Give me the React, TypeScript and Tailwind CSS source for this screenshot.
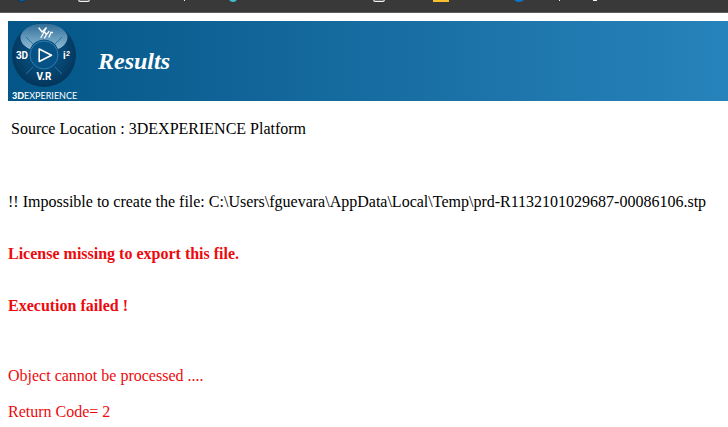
import React from "react";

function BookmarksBar() {
  return (
    <div className="flex h-[13px] items-start overflow-hidden border-b border-[#5c5c5c] bg-[#393939] pl-4">
      <svg className="shrink-0" width="62" height="3" aria-hidden="true">
        <circle cx="6" cy="-4" r="6" fill="#0b3a66" />
        <circle cx="6" cy="-3" r="4" fill="#1261a0" />
      </svg>
      <svg className="shrink-0" width="106" height="3" aria-hidden="true">
        <rect x="0.7" y="-9" width="10.6" height="10.4" rx="1.5" fill="none" stroke="#f2f2f2" strokeWidth="1.2" />
      </svg>
      <svg className="shrink-0" width="45" height="3" aria-hidden="true">
        <rect x="0" y="0" width="1" height="1" fill="#f2f2f2" />
      </svg>
      <svg className="shrink-0" width="144" height="3" aria-hidden="true">
        <circle cx="4" cy="-2" r="4" fill="#3fc1cf" />
      </svg>
      <svg className="shrink-0" width="60" height="3" aria-hidden="true">
        <rect x="0.7" y="-9" width="10.6" height="10.4" rx="1.5" fill="none" stroke="#f2f2f2" strokeWidth="1.2" />
      </svg>
      <svg className="shrink-0" width="80" height="3" aria-hidden="true">
        <rect width="16" height="2" fill="#f9bf2c" />
      </svg>
      <svg className="shrink-0" width="46" height="3" aria-hidden="true">
        <circle cx="6" cy="-5" r="7" fill="#0a78c8" />
      </svg>
      <svg className="shrink-0" width="60" height="3" aria-hidden="true">
        <path d="M0 0h1v1H0zM34 0h4v1h-4z" fill="#f2f2f2" />
      </svg>
    </div>
  );
}

function CompassLogo() {
  return (
    <svg className="shrink-0" width="72" height="80" viewBox="0 0 72 80" role="img" aria-label="3DEXPERIENCE">
      <defs>
        <radialGradient id="disc" cx="0.5" cy="0.45" r="0.55">
          <stop offset="0" stopColor="#07558a" />
          <stop offset="0.6" stopColor="#064672" />
          <stop offset="1" stopColor="#03355a" />
        </radialGradient>
        <linearGradient id="gloss" x1="0" y1="0" x2="0" y2="1">
          <stop offset="0" stopColor="#2f6c97" />
          <stop offset="0.5" stopColor="#5f95b8" />
          <stop offset="1" stopColor="#8fbad3" />
        </linearGradient>
      </defs>
      <circle cx="36" cy="34" r="32" fill="url(#disc)" />
      <path d="M12.500 15C15 7 25 2.500 36 2.500S57 7 59.500 15C60 23 53 27 50 28A15 15 0 0 0 22 28C17 26 12 22 12.500 15Z" fill="url(#gloss)" />
      <path d="M18 16l7 7M54 16l-7 7M18 53l7-7M54 53l-7-7" stroke="#2377a8" strokeWidth="1" />
      <circle cx="36" cy="34" r="14" fill="#075285" stroke="#2d80b0" strokeWidth="1" />
      <path d="M31.200 28v12.500L43.500 34.200Z" fill="none" stroke="#fff" strokeWidth="1.600" strokeLinejoin="round" />
      <g fill="#fff" fontWeight="700" fontFamily="Roboto, sans-serif">
        <text x="14" y="38" fontSize="10" textAnchor="middle">3D</text>
        <text x="55" y="38" fontSize="10">i</text>
        <text x="58" y="35" fontSize="7" fontStyle="italic">2</text>
        <text x="36" y="59" fontSize="10" textAnchor="middle">V.R</text>
      </g>
      <path d="M31 7l3 4 4.500-4.500L33 16.500M36.500 11l2 2.500 2.500-3M38.500 13.500L36.500 17M41 16l2-4.500M43 11.500h1.500" fill="none" stroke="#fff" strokeWidth="1.300" strokeLinecap="round" />
      <text x="4" y="78" fontSize="9" fill="#fff" fontFamily="Lato, sans-serif">
        <tspan fontWeight="900">3D</tspan>EXPERIENCE
      </text>
    </svg>
  );
}

export default function App() {
  return (
    <div className="bg-white font-['Liberation_Serif',serif] text-base leading-[18px] text-black">
      <BookmarksBar />
      <div className="pt-2 pb-1.5 pl-2">
        <header className="flex h-20 items-center gap-[18px] bg-linear-to-r from-[#035687] to-[#2783bb]">
          <CompassLogo />
          <h1 className="text-2xl font-bold text-white italic">Results</h1>
        </header>
        <main>
          <p className="mt-[19px] pl-[3px]">Source Location : 3DEXPERIENCE Platform</p>
          <p className="mt-[55px]">
            !! Impossible to create the file: C:\Users\fguevara\AppData\Local\Temp\prd-R1132101029687-00086106.stp
          </p>
          <div className="text-[#ec0a0e]">
            <p className="mt-[34px] font-bold">License missing to export this file.</p>
            <p className="mt-[34px] font-bold">Execution failed !</p>
            <p className="mt-[52px]">Object cannot be processed ....</p>
            <p className="mt-[18px]">Return Code= 2</p>
          </div>
        </main>
      </div>
    </div>
  );
}
